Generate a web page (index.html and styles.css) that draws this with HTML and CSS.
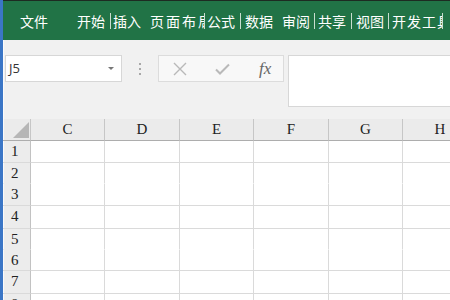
FILE: index.html
```html
<!DOCTYPE HTML>
<html>
<head>
<meta http-equiv="Content-Type" content="text/html; charset=utf-8">
<title>Excel</title>
<link rel="stylesheet" href="styles.css">
</head>
<body>
<div class="app">
  <div class="ribbon">
    <span class="tab">文件</span>
    <span class="tab">开始</span>
    <span class="tab sep">插入</span>
    <span class="tab">页面布局</span>
    <span class="tab sep">公式</span>
    <span class="tab sep">数据</span>
    <span class="tab">审阅</span>
    <span class="tab sep">共享</span>
    <span class="tab sep">视图</span>
    <span class="tab sep">开发工具</span>
    <span class="tab sep"></span>
  </div>

  <div class="toolbar">
    <div class="namebox">J5<span class="arrow"></span></div>
    <div class="dots"><i></i><i></i><i></i></div>
    <div class="btns">
      <svg class="ico-x" width="14" height="14" viewBox="0 0 14 14"><path d="M1 1L13 13M13 1L1 13" stroke="#b9b9b9" stroke-width="1.4" fill="none"/></svg>
      <svg class="ico-ok" width="15" height="12" viewBox="0 0 15 12"><path d="M1 6.5L5 10.5L14 1.5" stroke="#b9b9b9" stroke-width="2" fill="none"/></svg>
      <span class="fx">fx</span>
    </div>
    <div class="formula"></div>
  </div>

  <div class="sheet">
    <div class="row head">
      <div class="corner"><span class="tri"></span></div>
      <div>C</div><div>D</div><div>E</div><div>F</div><div>G</div><div>H</div>
    </div>
    <div class="row"><div class="rh">1</div><div></div><div></div><div></div><div></div><div></div><div></div></div>
    <div class="row short flat"><div class="rh">2</div><div></div><div></div><div></div><div></div><div></div><div></div></div>
    <div class="row"><div class="rh">3</div><div></div><div></div><div></div><div></div><div></div><div></div></div>
    <div class="row tall"><div class="rh">4</div><div></div><div></div><div></div><div></div><div></div><div></div></div>
    <div class="row short flat"><div class="rh">5</div><div></div><div></div><div></div><div></div><div></div><div></div></div>
    <div class="row short"><div class="rh">6</div><div></div><div></div><div></div><div></div><div></div><div></div></div>
    <div class="row tall"><div class="rh">7</div><div></div><div></div><div></div><div></div><div></div><div></div></div>
    <div class="row"><div class="rh">8</div><div></div><div></div><div></div><div></div><div></div><div></div></div>
  </div>
</div>
</body>
</html>
```

FILE: styles.css
```css
body {margin:0; width:450px; height:300px; overflow:hidden; background:#fff;}
.app {border-left:3px solid #3b76c6; height:300px; overflow:hidden;}

.ribbon {height:39px; border-top:1px solid #1d2b22; background:#217346; display:grid; align-items:center;
  grid-template-columns:74px 33px 40px 54px 36px 42px 32px 37px 37px 54px 1fr;
  font-family:"Noto Sans CJK SC", sans-serif; font-size:14px; color:#fff;}
.ribbon .tab {height:22px; line-height:22px; overflow:hidden; white-space:nowrap; box-sizing:border-box;}
.ribbon .sep {padding-left:1px; background:linear-gradient(#c9ddcf, #c9ddcf) left center / 1px 16px no-repeat;}
.ribbon .tab:nth-child(1) {padding-left:17px;}
.ribbon .tab:nth-child(3) {padding-left:3px;}
.ribbon .tab:nth-child(4) {letter-spacing:2px;}
.ribbon .tab:nth-child(5) {padding-left:3px;}
.ribbon .tab:nth-child(6) {padding-left:5px;}
.ribbon .tab:nth-child(8) {padding-left:4px;}
.ribbon .tab:nth-child(9) {padding-left:5px;}
.ribbon .tab:nth-child(10) {padding-left:4px; letter-spacing:1px;}

.toolbar {height:64px; padding-top:15px; background:#f1f1f1; display:flex; align-items:flex-start;
  box-shadow:inset 1px 0 0 #fbfbfb;}
.namebox {position:relative; margin-left:2px; width:117px; height:27px; box-sizing:border-box; background:#fff;
  border:1px solid #d7d7d7; padding-left:3px; font-family:"Open Sans", sans-serif; font-size:13px; line-height:25px; color:#333;}
.namebox .arrow {position:absolute; right:7px; top:11px; border-left:3px solid transparent; border-right:3px solid transparent; border-top:3px solid #777;}
.dots {width:36px; height:27px; display:flex; flex-direction:column; align-items:center; justify-content:center; gap:3px;}
.dots i {width:2px; height:2px; background:#a8a8a8;}
.btns {width:126px; height:27px; box-sizing:border-box; background:#f8f8f8; border:1px solid #dcdcdc; display:flex; align-items:center;}
.ico-x {margin-left:14px;}
.ico-ok {margin-left:28px;}
.fx {margin-left:29px; font-family:"Liberation Serif", serif; font-style:italic; font-size:17px; color:#666;}
.formula {margin-left:4px; flex:1; height:52px; box-sizing:border-box; background:#fff; border:1px solid #d7d7d7; border-right:none;}

.sheet {font-family:"Liberation Serif", serif; font-size:15px; color:#222;}
.row {display:grid; grid-template-columns:28px 74px 75px 74px 75px 74px 75px; grid-template-rows:100%; height:22px;}
.row.short {height:21px;}
.row.tall {height:23px;}
.row > div {box-sizing:border-box; min-height:0; border-right:1px solid #dadada; border-bottom:1px solid #dadada; background:#fff;}
.row.flat > div {border-bottom-color:transparent;}
.row .rh {background:#ececec; border-right-color:#c2c2c2; padding-left:8px; line-height:20px; box-shadow:inset 1px 0 0 #fafafa;}
.head > div {background:#ebebeb; border-right-color:#c6c6c6; border-bottom-color:#adadad; text-align:center; line-height:20px;}
.head .corner {position:relative; box-shadow:inset 1px 0 0 #fafafa;}
.corner .tri {position:absolute; right:1px; bottom:2px; width:0; height:0; border-left:16px solid transparent; border-bottom:16px solid #b6b6b6;}
```
